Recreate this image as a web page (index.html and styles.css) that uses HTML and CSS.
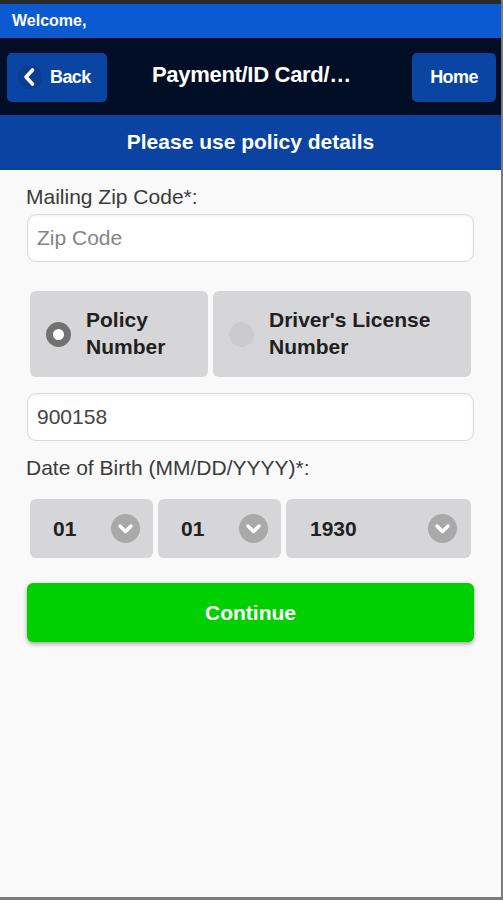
FILE: index.html
```html
<!DOCTYPE html>
<html lang="en">
<head>
<meta charset="utf-8">
<title>Payment/ID Card</title>
<link rel="stylesheet" href="styles.css">
</head>
<body>
<div class="app">
  <div class="welcome">Welcome,</div>
  <header class="topbar">
    <a class="navbtn back" href="#">
      <svg class="back-icon" width="24" height="24" viewBox="0 0 24 24" aria-hidden="true">
        <circle cx="12" cy="12" r="12" fill="#083d92"/>
        <polyline points="14.5,5 8,12 14.5,19" fill="none" stroke="#fff" stroke-width="3.6" stroke-linecap="round" stroke-linejoin="round"/>
      </svg>
      <span>Back</span>
    </a>
    <h1 class="title">Payment/ID Card/…</h1>
    <a class="navbtn home" href="#">Home</a>
  </header>
  <div class="subbar">Please use policy details</div>
  <main class="form">
    <label class="label" for="zip">Mailing Zip Code*:</label>
    <input class="field" id="zip" type="text" placeholder="Zip Code">

    <div class="radio-group">
      <div class="radio-opt">
        <span class="radio checked"></span>
        <span class="radio-text">Policy Number</span>
      </div>
      <div class="radio-opt">
        <span class="radio"></span>
        <span class="radio-text">Driver's License Number</span>
      </div>
    </div>

    <input class="field policy" type="text" value="900158">

    <label class="label dob">Date of Birth (MM/DD/YYYY)*:</label>
    <div class="selects">
      <div class="select">
        <span class="select-val">01</span>
        <svg class="chev" width="29" height="29" viewBox="0 0 29 29" aria-hidden="true"><circle cx="14.5" cy="14.5" r="14.5" fill="#a9a9aa"/><polyline points="9,12 14.5,17.5 20,12" fill="none" stroke="#fff" stroke-width="3.4" stroke-linecap="round" stroke-linejoin="round"/></svg>
      </div>
      <div class="select">
        <span class="select-val">01</span>
        <svg class="chev" width="29" height="29" viewBox="0 0 29 29" aria-hidden="true"><circle cx="14.5" cy="14.5" r="14.5" fill="#a9a9aa"/><polyline points="9,12 14.5,17.5 20,12" fill="none" stroke="#fff" stroke-width="3.4" stroke-linecap="round" stroke-linejoin="round"/></svg>
      </div>
      <div class="select">
        <span class="select-val">1930</span>
        <svg class="chev" width="29" height="29" viewBox="0 0 29 29" aria-hidden="true"><circle cx="14.5" cy="14.5" r="14.5" fill="#a9a9aa"/><polyline points="9,12 14.5,17.5 20,12" fill="none" stroke="#fff" stroke-width="3.4" stroke-linecap="round" stroke-linejoin="round"/></svg>
      </div>
    </div>

    <button class="continue" type="button">Continue</button>
  </main>
</div>
</body>
</html>
```

FILE: styles.css
```css
* { box-sizing: border-box; }

html, body {
  margin: 0;
  padding: 0;
  background: #7b7b7b;
}

body {
  font-family: "Liberation Sans", Arial, sans-serif;
  width: 503px;
  height: 900px;
  overflow: hidden;
}

.app {
  width: 501px;
  height: 897px;
  background: #f9f9f9;
  border-top: 4px solid #2a2a2a;
  display: flex;
  flex-direction: column;
}

.welcome {
  height: 34px;
  background: #0b5ad2;
  color: #fff;
  font-weight: bold;
  font-size: 16px;
  padding-left: 12px;
  display: flex;
  align-items: center;
}

.topbar {
  height: 77px;
  background: #020e26;
  display: grid;
  grid-template-columns: 1fr auto 1fr;
  align-items: center;
  padding: 1px 5px 0 7px;
}

.navbtn {
  height: 49px;
  background: #0a45a3;
  border-radius: 5px;
  color: #fff;
  text-decoration: none;
  font-weight: bold;
  font-size: 18px;
  letter-spacing: -0.6px;
  display: flex;
  align-items: center;
}

.back {
  justify-self: start;
  width: 100px;
  padding-left: 11px;
  gap: 8px;
}

.back-icon { flex: none; }

.home {
  justify-self: end;
  width: 84px;
  justify-content: center;
}

.title {
  margin: 0 0 5px;
  color: #fff;
  font-size: 22px;
  font-weight: bold;
  letter-spacing: -0.3px;
  white-space: nowrap;
}

.subbar {
  height: 55px;
  background: #0a43a1;
  color: #fff;
  font-weight: bold;
  font-size: 21px;
  display: flex;
  align-items: center;
  justify-content: center;
  padding-bottom: 2px;
}

.form {
  padding: 15px 27px 0 27px;
  display: flex;
  flex-direction: column;
}

.label {
  font-size: 21px;
  line-height: 24px;
  color: #3b3b3b;
  margin-left: -1px;
}

.field {
  margin-top: 5px;
  height: 48px;
  width: 100%;
  border: 1px solid #dadada;
  border-radius: 9px;
  background: #fff;
  box-shadow: inset 0 1px 3px rgba(0, 0, 0, 0.07);
  font-family: "Liberation Sans", Arial, sans-serif;
  font-size: 21px;
  color: #444;
  padding: 0 9px;
  outline: none;
}

.field::placeholder { color: #858585; }

.radio-group {
  margin: 29px 3px 0;
  display: grid;
  grid-template-columns: 178px 1fr;
  gap: 5px;
}

.radio-opt {
  height: 86px;
  background: #d6d6d8;
  border-radius: 6px;
  display: flex;
  align-items: center;
  padding: 0 12px 0 16px;
  gap: 15px;
}

.radio {
  flex: none;
  width: 25px;
  height: 25px;
  border-radius: 50%;
  background: #cbcbcd;
}

.radio.checked {
  background: #fff;
  border: 7px solid #717171;
}

.radio-text {
  font-size: 21px;
  line-height: 27px;
  font-weight: bold;
  color: #202020;
  padding-bottom: 2px;
}

.field.policy { margin-top: 16px; }

.label.dob { margin-top: 15px; }

.selects {
  margin: 19px 3px 0;
  display: grid;
  grid-template-columns: 123px 123px 1fr;
  gap: 5px;
}

.select {
  height: 59px;
  background: #d6d6d8;
  border-radius: 6px;
  display: flex;
  align-items: center;
  justify-content: space-between;
  padding: 0 13px 0 23px;
}

.select:last-child { padding-left: 24px; padding-right: 14px; }

.select-val {
  font-size: 21px;
  font-weight: bold;
  color: #222;
}

.chev { flex: none; }

.continue {
  margin-top: 25px;
  height: 59px;
  width: 100%;
  border: none;
  border-radius: 6px;
  background: #00d000;
  color: #fff;
  font-family: "Liberation Sans", Arial, sans-serif;
  font-weight: bold;
  font-size: 21px;
  box-shadow: 0 2px 4px rgba(0, 0, 0, 0.35);
  padding: 0;
}
```
